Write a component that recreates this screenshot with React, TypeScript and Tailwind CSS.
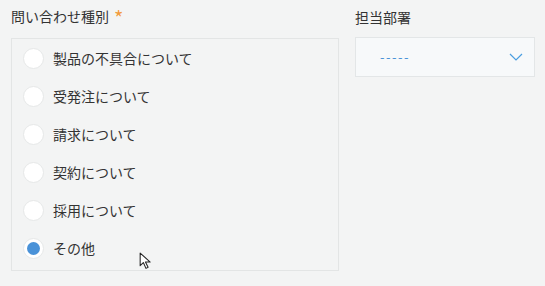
import React from "react";

const options = [
  "製品の不具合について",
  "受発注について",
  "請求について",
  "契約について",
  "採用について",
  "その他",
];

export default function App() {
  return (
    <div
      className="relative w-[545px] h-[286px] bg-[#f3f4f4] text-[#333333] text-[14px] overflow-hidden"
      style={{ fontFamily: '"Noto Sans CJK JP", "Noto Sans", sans-serif' }}
    >
      <div className="flex pt-[5px]">
        <div className="ml-[11px] w-[328px]">
          <div className="h-[22px] leading-[22px] flex items-center">
            <span>問い合わせ種別</span>
            <span className="ml-[5px] text-[#f29b3c] text-[20px] leading-[22px] mt-[4px]">*</span>
          </div>
          <div className="mt-[11px] border border-[#e3e5e5] pb-[3px]">
            {options.map((o, i) => (
              <div key={o} className="h-[38px] flex items-center pl-[11px]">
                <div className="w-[21px] h-[21px] rounded-full bg-white border border-[#e6e8e8] flex items-center justify-center">
                  {i === 5 && <div className="w-[13px] h-[13px] rounded-full bg-[#4a92d8]" />}
                </div>
                <span className="ml-[9px]">{o}</span>
              </div>
            ))}
          </div>
        </div>
        <div className="ml-[16px] w-[180px]">
          <div className="h-[22px] leading-[22px] mt-[1px]">担当部署</div>
          <div className="mt-[9px] h-[40px] border border-[#e3e6e7] bg-[#f7f9fa] flex items-center justify-between pl-[24px] pr-[11px]">
            <span className="text-[#4a92d8] text-[13px] tracking-[1.5px]">-----</span>
            <svg width="14" height="8" viewBox="0 0 14 8" fill="none">
              <path d="M1 1 L7 7 L13 1" stroke="#4a9ee0" strokeWidth="1.2" />
            </svg>
          </div>
        </div>
      </div>
      <svg
        className="absolute left-[139px] top-[252px]"
        width="15"
        height="19"
        viewBox="0 0 14 18"
      >
        <path
          d="M1 1 L1 13 L4 10 L6.5 15.5 L8.5 14.5 L6 9.5 L10.5 9.5 Z"
          fill="white"
          stroke="#222"
          strokeWidth="1"
          strokeLinejoin="round"
        />
      </svg>
    </div>
  );
}
